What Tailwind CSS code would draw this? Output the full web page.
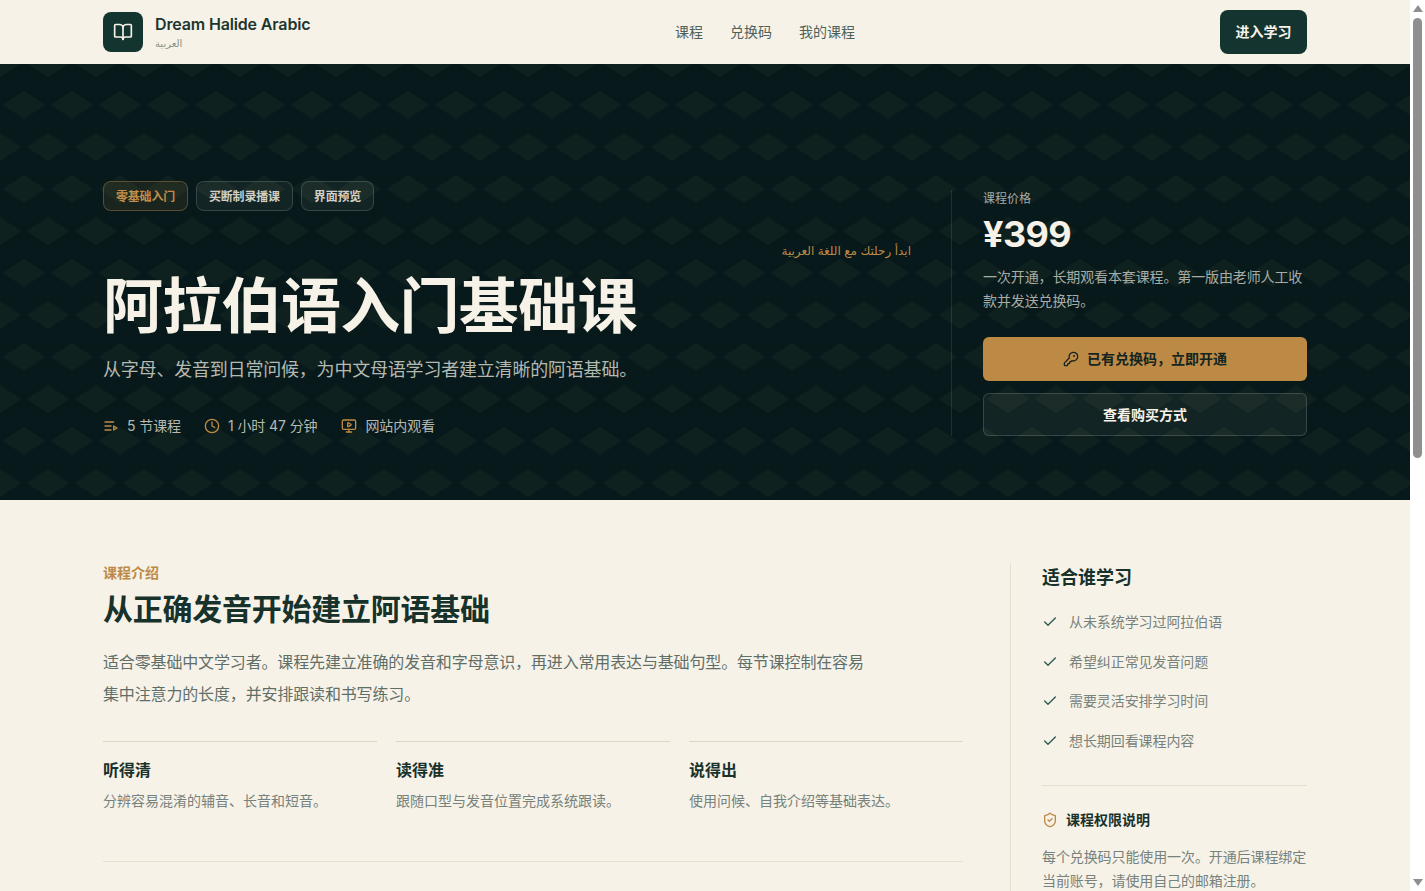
<!DOCTYPE html>
<html lang="en">
  <head>
    <meta charset="UTF-8" />
    <meta name="viewport" content="width=device-width, initial-scale=1.0" />
    <title>Dream Halide Arabic</title>
    <script src="https://cdn.jsdelivr.net/npm/@tailwindcss/browser@4"></script>
  </head>
  <body class="pr-[15px] bg-[#f7f2e8] text-[#17312b] font-['Inter','Noto_Sans_CJK_SC','DejaVu_Sans',sans-serif]">
    <!-- Header -->
    <header class="h-16 px-[103px] flex items-center bg-[#f7f2e8]">
      <div class="flex items-center gap-3 w-[300px]">
        <div class="w-10 h-10 rounded-lg bg-[#14352f] flex items-center justify-center">
          <svg class="w-5 h-5 text-[#f7f2e8]" fill="none" viewBox="0 0 24 24" stroke="currentColor" stroke-width="2" stroke-linecap="round" stroke-linejoin="round">
            <path d="M12 7v14" />
            <path d="M3 18a1 1 0 0 1-1-1V4a1 1 0 0 1 1-1h5a4 4 0 0 1 4 4 4 4 0 0 1 4-4h5a1 1 0 0 1 1 1v13a1 1 0 0 1-1 1h-6a3 3 0 0 0-3 3 3 3 0 0 0-3-3z" />
          </svg>
        </div>
        <div>
          <div class="text-base leading-6 font-semibold tracking-[-0.15px] text-[#1d352f] -mt-[1px]">Dream Halide Arabic</div>
          <div class="-mt-[1px] text-[10px] leading-4 text-[#8a8f86]">العربية</div>
        </div>
      </div>
      <nav class="ml-[272px] flex items-center gap-[27px] text-sm text-[#4e625b]">
        <a>课程</a>
        <a>兑换码</a>
        <a>我的课程</a>
      </nav>
      <button class="ml-auto w-[87px] h-11 rounded-lg bg-[#14352f] text-[#f7f2e8] text-sm font-semibold">进入学习</button>
    </header>

    <!-- Hero -->
    <section class="relative h-[436px] bg-[#07191a] overflow-hidden">
      <svg class="absolute inset-0 w-full h-full" aria-hidden="true">
        <defs>
          <pattern id="diamonds" width="48" height="84" patternUnits="userSpaceOnUse">
            <polygon points="24,27 45,41 24,55 3,41" fill="#0f211e" />
            <polygon points="0,69 21,83 0,97 -21,83" fill="#0f211e" />
            <polygon points="48,69 69,83 48,97 27,83" fill="#0f211e" />
            <polygon points="0,-15 21,-1 0,13 -21,-1" fill="#0f211e" />
            <polygon points="48,-15 69,-1 48,13 27,-1" fill="#0f211e" />
          </pattern>
        </defs>
        <rect width="100%" height="100%" fill="url(#diamonds)" />
      </svg>
      <div class="relative px-[103px] pt-[117px] flex gap-10">
        <div class="w-[808px]">
          <div class="flex gap-2 text-xs font-semibold tracking-[-0.2px]">
            <span class="h-[30px] px-3 pt-[1px] flex items-center rounded-lg border border-[#bd8a46]/40 bg-[#bd8a46]/10 text-[#c08d4a]">零基础入门</span>
            <span class="h-[30px] px-3 pt-[1px] flex items-center rounded-lg border border-white/15 bg-white/5 text-[#d0d0c8]">买断制录播课</span>
            <span class="h-[30px] px-3 pt-[1px] flex items-center rounded-lg border border-white/15 bg-white/5 text-[#d0d0c8]">界面预览</span>
          </div>
          <div class="mt-[30px] text-xs leading-5 text-right text-[#bd8a46]" dir="rtl">ابدأ رحلتك مع اللغة العربية</div>
          <h1 class="mt-[9px] text-[60px] leading-[72px] font-bold tracking-[-0.7px] text-[#f7f2e8]">阿拉伯语入门基础课</h1>
          <p class="mt-[14px] text-lg leading-7 tracking-[-0.2px] text-[#b4b9b2]">从字母、发音到日常问候，为中文母语学习者建立清晰的阿语基础。</p>
          <div class="mt-[32px] flex items-center gap-[23px] text-sm leading-5 tracking-[-0.1px] text-[#b4b9b2]">
            <span class="flex items-center gap-2">
              <svg class="w-4 h-4 text-[#bd8a46]" fill="none" viewBox="0 0 24 24" stroke="currentColor" stroke-width="2" stroke-linecap="round" stroke-linejoin="round">
                <path d="M12 12H3" /><path d="M16 6H3" /><path d="M12 18H3" /><path d="m16 12 5 3-5 3v-6Z" />
              </svg>
              5 节课程
            </span>
            <span class="flex items-center gap-2">
              <svg class="w-4 h-4 text-[#bd8a46]" fill="none" viewBox="0 0 24 24" stroke="currentColor" stroke-width="2" stroke-linecap="round" stroke-linejoin="round">
                <circle cx="12" cy="12" r="10" /><polyline points="12 6 12 12 16 14" />
              </svg>
              1 小时 47 分钟
            </span>
            <span class="ml-[1px] flex items-center gap-2">
              <svg class="w-4 h-4 text-[#bd8a46]" fill="none" viewBox="0 0 24 24" stroke="currentColor" stroke-width="2" stroke-linecap="round" stroke-linejoin="round">
                <path d="M10 7.75a.75.75 0 0 1 1.142-.638l3.664 2.249a.75.75 0 0 1 0 1.278l-3.664 2.25a.75.75 0 0 1-1.142-.64z" /><path d="M12 17v4" /><path d="M8 21h8" /><rect x="2" y="3" width="20" height="14" rx="2" />
              </svg>
              网站内观看
            </span>
          </div>
        </div>
        <div class="w-[356px] mt-[9px] h-[246px] pl-[31px] border-l border-white/10">
          <div class="mt-[1px] text-xs leading-4 text-[#a7aca5]">课程价格</div>
          <div class="mt-[5px] text-4xl leading-[44px] font-bold tracking-[-0.6px] text-[#f7f2e8]">¥399</div>
          <p class="mt-[9px] text-sm leading-6 tracking-[-0.12px] text-[#a7aca5]">一次开通，长期观看本套课程。第一版由老师人工收款并发送兑换码。</p>
          <button class="mt-6 w-full h-11 rounded-md bg-[#bd8a46] text-[#14241f] text-sm font-semibold flex items-center justify-center gap-2">
            <svg class="w-4 h-4" fill="none" viewBox="0 0 24 24" stroke="currentColor" stroke-width="2" stroke-linecap="round" stroke-linejoin="round">
              <path d="M2.586 17.414A2 2 0 0 0 2 18.828V21a1 1 0 0 0 1 1h3a1 1 0 0 0 1-1v-1a1 1 0 0 1 1-1h1a1 1 0 0 0 1-1v-1a1 1 0 0 1 1-1h.172a2 2 0 0 0 1.414-.586l.814-.814a6.5 6.5 0 1 0-4-4z" /><circle cx="16.5" cy="7.5" r=".5" fill="currentColor" />
            </svg>
            已有兑换码，立即开通
          </button>
          <button class="mt-3 w-full h-[43px] rounded-md border border-white/15 bg-white/5 text-[#f7f2e8] text-sm font-semibold">查看购买方式</button>
        </div>
      </div>
    </section>

    <!-- Intro -->
    <section class="px-[103px] pt-[63px] flex">
      <div class="w-[860px]">
        <div class="text-sm leading-5 font-semibold text-[#bd8a46]">课程介绍</div>
        <h2 class="mt-[6px] text-3xl leading-[40px] font-bold tracking-[-0.25px] text-[#17312b]">从正确发音开始建立阿语基础</h2>
        <p class="mt-[17px] max-w-[768px] text-base leading-8 tracking-[-0.15px] text-[#5f6f68]">适合零基础中文学习者。课程先建立准确的发音和字母意识，再进入常用表达与基础句型。每节课控制在容易集中注意力的长度，并安排跟读和书写练习。</p>
        <div class="mt-[31px] grid grid-cols-3 gap-[19px]">
          <div class="border-t border-[#ded6c6] pt-4">
            <h3 class="text-base leading-6 font-semibold text-[#17312b]">听得清</h3>
            <p class="mt-[7px] text-sm leading-6 text-[#76827b]">分辨容易混淆的辅音、长音和短音。</p>
          </div>
          <div class="border-t border-[#ded6c6] pt-4">
            <h3 class="text-base leading-6 font-semibold text-[#17312b]">读得准</h3>
            <p class="mt-[7px] text-sm leading-6 text-[#76827b]">跟随口型与发音位置完成系统跟读。</p>
          </div>
          <div class="border-t border-[#ded6c6] pt-4">
            <h3 class="text-base leading-6 font-semibold text-[#17312b]">说得出</h3>
            <p class="mt-[7px] text-sm leading-6 text-[#76827b]">使用问候、自我介绍等基础表达。</p>
          </div>
        </div>
        <div class="mt-[48px] h-[870px] border-t border-[#e6dfd1]"></div>
      </div>
      <aside class="ml-[47px] w-[297px] pl-[31px] border-l border-[#e6dfd1]">
        <h2 class="mt-[1px] text-lg leading-7 font-semibold text-[#17312b]">适合谁学习</h2>
        <ul class="mt-[18px] flex flex-col gap-[15.6px] text-sm leading-6 tracking-[-0.08px] text-[#76827b]">
          <li class="flex items-center gap-[11px]">
            <svg class="w-4 h-4 text-[#2c5a4e]" fill="none" viewBox="0 0 24 24" stroke="currentColor" stroke-width="2" stroke-linecap="round" stroke-linejoin="round"><path d="M20 6 9 17l-5-5" /></svg>
            从未系统学习过阿拉伯语
          </li>
          <li class="flex items-center gap-[11px]">
            <svg class="w-4 h-4 text-[#2c5a4e]" fill="none" viewBox="0 0 24 24" stroke="currentColor" stroke-width="2" stroke-linecap="round" stroke-linejoin="round"><path d="M20 6 9 17l-5-5" /></svg>
            希望纠正常见发音问题
          </li>
          <li class="flex items-center gap-[11px]">
            <svg class="w-4 h-4 text-[#2c5a4e]" fill="none" viewBox="0 0 24 24" stroke="currentColor" stroke-width="2" stroke-linecap="round" stroke-linejoin="round"><path d="M20 6 9 17l-5-5" /></svg>
            需要灵活安排学习时间
          </li>
          <li class="flex items-center gap-[11px]">
            <svg class="w-4 h-4 text-[#2c5a4e]" fill="none" viewBox="0 0 24 24" stroke="currentColor" stroke-width="2" stroke-linecap="round" stroke-linejoin="round"><path d="M20 6 9 17l-5-5" /></svg>
            想长期回看课程内容
          </li>
        </ul>
        <div class="mt-[32px] pt-[22px] border-t border-[#e6dfd1]">
          <div class="flex items-center gap-2 text-sm leading-6 font-semibold text-[#17312b]">
            <svg class="w-4 h-4 text-[#bd8a46]" fill="none" viewBox="0 0 24 24" stroke="currentColor" stroke-width="2" stroke-linecap="round" stroke-linejoin="round">
              <path d="M20 13c0 5-3.5 7.5-7.66 8.95a1 1 0 0 1-.67-.01C7.5 20.5 4 18 4 13V6a1 1 0 0 1 1-1c2 0 4.5-1.2 6.24-2.72a1.17 1.17 0 0 1 1.52 0C14.51 3.81 17 5 19 5a1 1 0 0 1 1 1z" /><path d="m9 12 2 2 4-4" />
            </svg>
            课程权限说明
          </div>
          <p class="mt-[13px] text-sm leading-6 tracking-[-0.1px] text-[#76827b]">每个兑换码只能使用一次。开通后课程绑定当前账号，请使用自己的邮箱注册。</p>
        </div>
      </aside>
    </section>

    <!-- Window scrollbar as it shows in the screenshot -->
    <div class="fixed top-0 right-0 bottom-0 w-[15px] bg-white flex flex-col items-center">
      <div class="mt-[5px] w-0 h-0 border-x-[5px] border-x-transparent border-b-[7px] border-b-[#8f8f8f]"></div>
      <div class="mt-[6px] w-[9px] h-[440px] rounded-full bg-[#8f8f8f]"></div>
      <div class="mt-auto mb-[5px] w-0 h-0 border-x-[5px] border-x-transparent border-t-[7px] border-t-[#8f8f8f]"></div>
    </div>
  </body>
</html>
